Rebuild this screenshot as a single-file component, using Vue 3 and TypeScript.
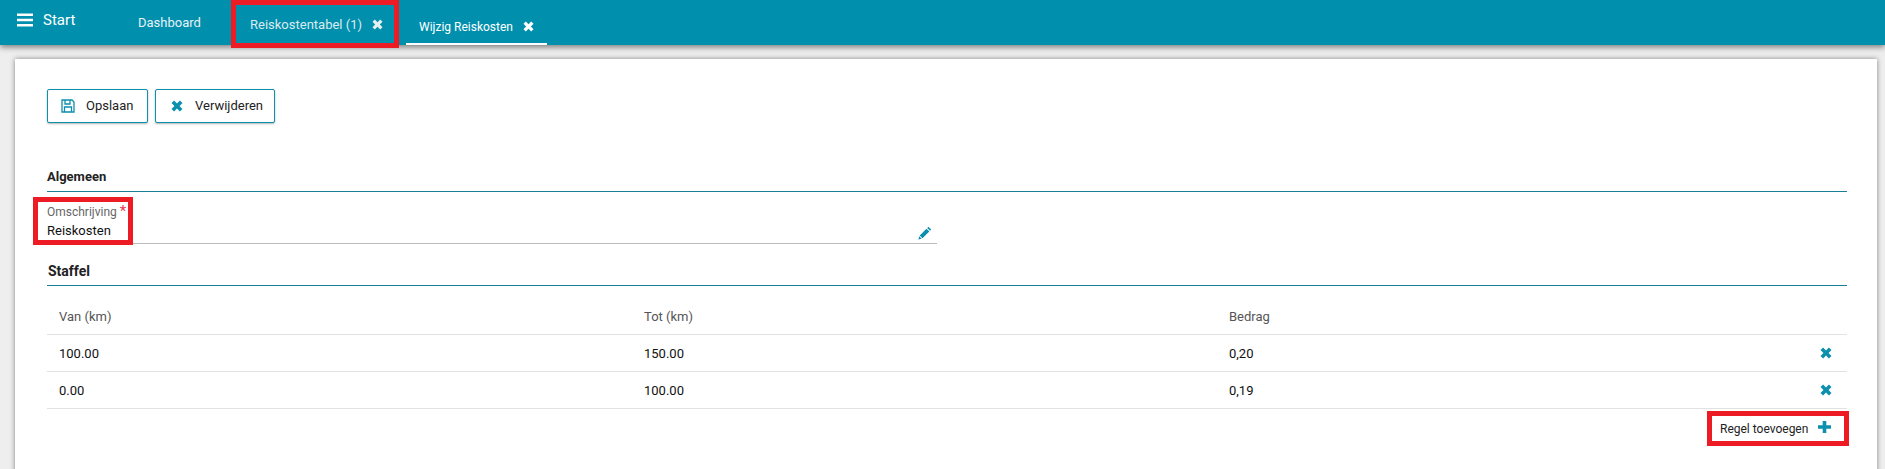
<script setup lang="ts">
const rows = [
  { van: '100.00', tot: '150.00', bedrag: '0,20' },
  { van: '0.00', tot: '100.00', bedrag: '0,19' }
]
const cross = 'M3.6 .6 L7 4 L10.4 .6 L13.4 3.6 L10 7 L13.4 10.4 L10.4 13.4 L7 10 L3.6 13.4 L.6 10.4 L4 7 L.6 3.6 Z'
</script>

<template>
  <div class="page">
    <header class="topbar">
      <div class="start">
        <svg class="burger" width="16" height="14" viewBox="0 0 16 14">
          <path d="M0 0.5h16v2.6H0zM0 5.7h16v2.6H0zM0 10.9h16v2.6H0z" fill="#fff" />
        </svg>
        <span>Start</span>
      </div>
      <a class="tab dashboard">Dashboard</a>
      <a class="tab marked">
        Reiskostentabel (1)
        <svg width="11" height="11" viewBox="0 0 14 14"><path :d="cross" fill="#e6eef0" /></svg>
      </a>
      <a class="tab active">
        Wijzig Reiskosten
        <svg width="11" height="11" viewBox="0 0 14 14"><path :d="cross" fill="#fff" /></svg>
      </a>
    </header>

    <main class="card">
      <div class="actions">
        <button class="btn save">
          <svg width="14" height="14" viewBox="0 0 14 14" fill="none" stroke="#0d8fae" stroke-width="1.3">
            <path d="M1 1h10l2 2v10H1z" />
            <path d="M4 1v4h5V1M3.5 13V8h7v5" />
          </svg>
          Opslaan
        </button>
        <button class="btn remove">
          <svg width="12" height="12" viewBox="0 0 14 14"><path :d="cross" fill="#0d8fae" /></svg>
          Verwijderen
        </button>
      </div>

      <h2 class="section first">Algemeen</h2>
      <div class="field">
        <div class="field-text">
          <label>Omschrijving <b>*</b></label>
          <div class="value">Reiskosten</div>
        </div>
        <svg class="pencil" width="14" height="14" viewBox="0 0 14 14">
          <path d="M10.4 0.8 L13.2 3.6 L12 4.8 L9.2 2 Z M8.5 2.7 L11.3 5.5 L4.5 12.3 L1.7 9.5 Z M1.2 10.3 L3.7 12.8 L0.4 13.6 Z" fill="#0d8fae" />
        </svg>
      </div>

      <h2 class="section second">Staffel</h2>
      <div class="row head">
        <span>Van (km)</span>
        <span>Tot (km)</span>
        <span>Bedrag</span>
        <span></span>
      </div>
      <div v-for="r in rows" :key="r.van" class="row">
        <span>{{ r.van }}</span>
        <span>{{ r.tot }}</span>
        <span>{{ r.bedrag }}</span>
        <svg class="row-x" width="12" height="12" viewBox="0 0 14 14"><path :d="cross" fill="#0d8fae" /></svg>
      </div>
      <div class="add-line">
        <div class="add">
          Regel toevoegen
          <svg class="plus" width="13" height="12" viewBox="0 0 13 12"><path d="M4.7 0h3.6v4.2H13v3.6H8.3V12H4.7V7.8H0V4.2h4.7z" fill="#0d8fae" /></svg>
        </div>
      </div>
    </main>
  </div>
</template>

<style scoped>
.page {
  height: 469px;
  overflow: hidden;
  background: #eeeeee;
  font-family: Roboto, "Liberation Sans", sans-serif;
  font-size: 13px;
  color: #222;
}

.topbar {
  height: 45px;
  background: #008fad;
  box-shadow: 0 2px 6px rgba(0, 0, 0, 0.5);
  display: flex;
  color: #fff;
  position: relative;
}

.start {
  display: flex;
  align-items: center;
  gap: 10px;
  width: 120px;
  padding: 0 0 5px 17px;
  box-sizing: border-box;
  font-size: 15px;
  height: 45px;
}

.tab {
  display: flex;
  align-items: center;
  white-space: nowrap;
}

.dashboard {
  width: 111px;
  box-sizing: border-box;
  color: #e8f2f5;
  padding: 0 0 0 18px;
  font-size: 13px;
}

.marked {
  width: 168px;
  height: 48px;
  box-sizing: border-box;
  border: 5px solid #ed1c24;
  padding: 0 0 0 14px;
  gap: 10px;
  color: #dcebef;
  position: relative;
}

.active {
  margin: 0 0 0 7px;
  width: 141px;
  box-sizing: border-box;
  height: 45px;
  padding: 10px 0 0 13px;
  gap: 10px;
  font-size: 12px;
  border-bottom: 2px solid #fff;
}

.card {
  margin: 14px 8px 0 15px;
  height: 420px;
  padding: 30px 30px 0 32px;
  box-sizing: border-box;
  background: #fff;
  box-shadow: 0 0 5px rgba(0, 0, 0, 0.45);
}

.actions {
  display: flex;
  gap: 7px;
}

.btn {
  height: 34px;
  padding: 0 0 1px;
  display: flex;
  align-items: center;
  box-sizing: border-box;
  background: #fff;
  border: 1px solid #0d8fae;
  border-radius: 2px;
  box-shadow: 0 1px 2px rgba(0, 0, 0, 0.3);
  font: inherit;
  color: #222;
}

.save {
  width: 101px;
  padding-left: 13px;
  gap: 11px;
}

.remove {
  width: 120px;
  padding-left: 15px;
  gap: 12px;
}

.section {
  margin: 0;
  font-size: 13px;
  font-weight: 700;
  color: #222;
  line-height: 16px;
  padding-bottom: 6px;
  border-bottom: 1px solid #1a7f96;
}

.first {
  margin-top: 46px;
}

.second {
  margin-top: 19px;
  padding-left: 1px;
  font-size: 14px;
}

.field {
  width: 890px;
  height: 52px;
  box-sizing: border-box;
  border-bottom: 1px solid #bdbdbd;
  position: relative;
  display: flex;
  align-items: flex-end;
  padding-right: 5px;
}

.field-text {
  position: absolute;
  left: -14px;
  top: 5px;
  width: 100px;
  height: 48px;
  box-sizing: border-box;
  border: 5px solid #ed1c24;
  padding: 0 0 0 9px;
  background: #fff;
}

label {
  display: block;
  font-size: 12px;
  line-height: 16px;
  margin-top: 1px;
  color: #666;
  white-space: nowrap;
}

label b {
  color: #f0344f;
  font-weight: 400;
  font-size: 15px;
}

.value {
  font-size: 13px;
  line-height: 17px;
  margin-top: 2px;
  color: #111;
}

.pencil {
  margin-left: auto;
  margin-bottom: 3px;
}

.row {
  display: grid;
  grid-template-columns: 585px 585px 1fr 27px;
  align-items: center;
  height: 37px;
  padding-left: 12px;
  box-sizing: border-box;
  border-bottom: 1px solid #e2e2e2;
  color: #111;
}

.head {
  height: 49px;
  padding-top: 12px;
  color: #555;
}

.add-line {
  display: flex;
  justify-content: flex-end;
  margin-right: -2px;
  margin-top: 2px;
}

.add {
  width: 142px;
  height: 35px;
  box-sizing: border-box;
  border: 5px solid #ed1c24;
  display: flex;
  align-items: center;
  padding-left: 8px;
  gap: 10px;
  font-size: 12px;
  color: #222;
}

.plus {
  margin-bottom: 3px;
}
</style>

<style>
body {
  margin: 0;
}
</style>
